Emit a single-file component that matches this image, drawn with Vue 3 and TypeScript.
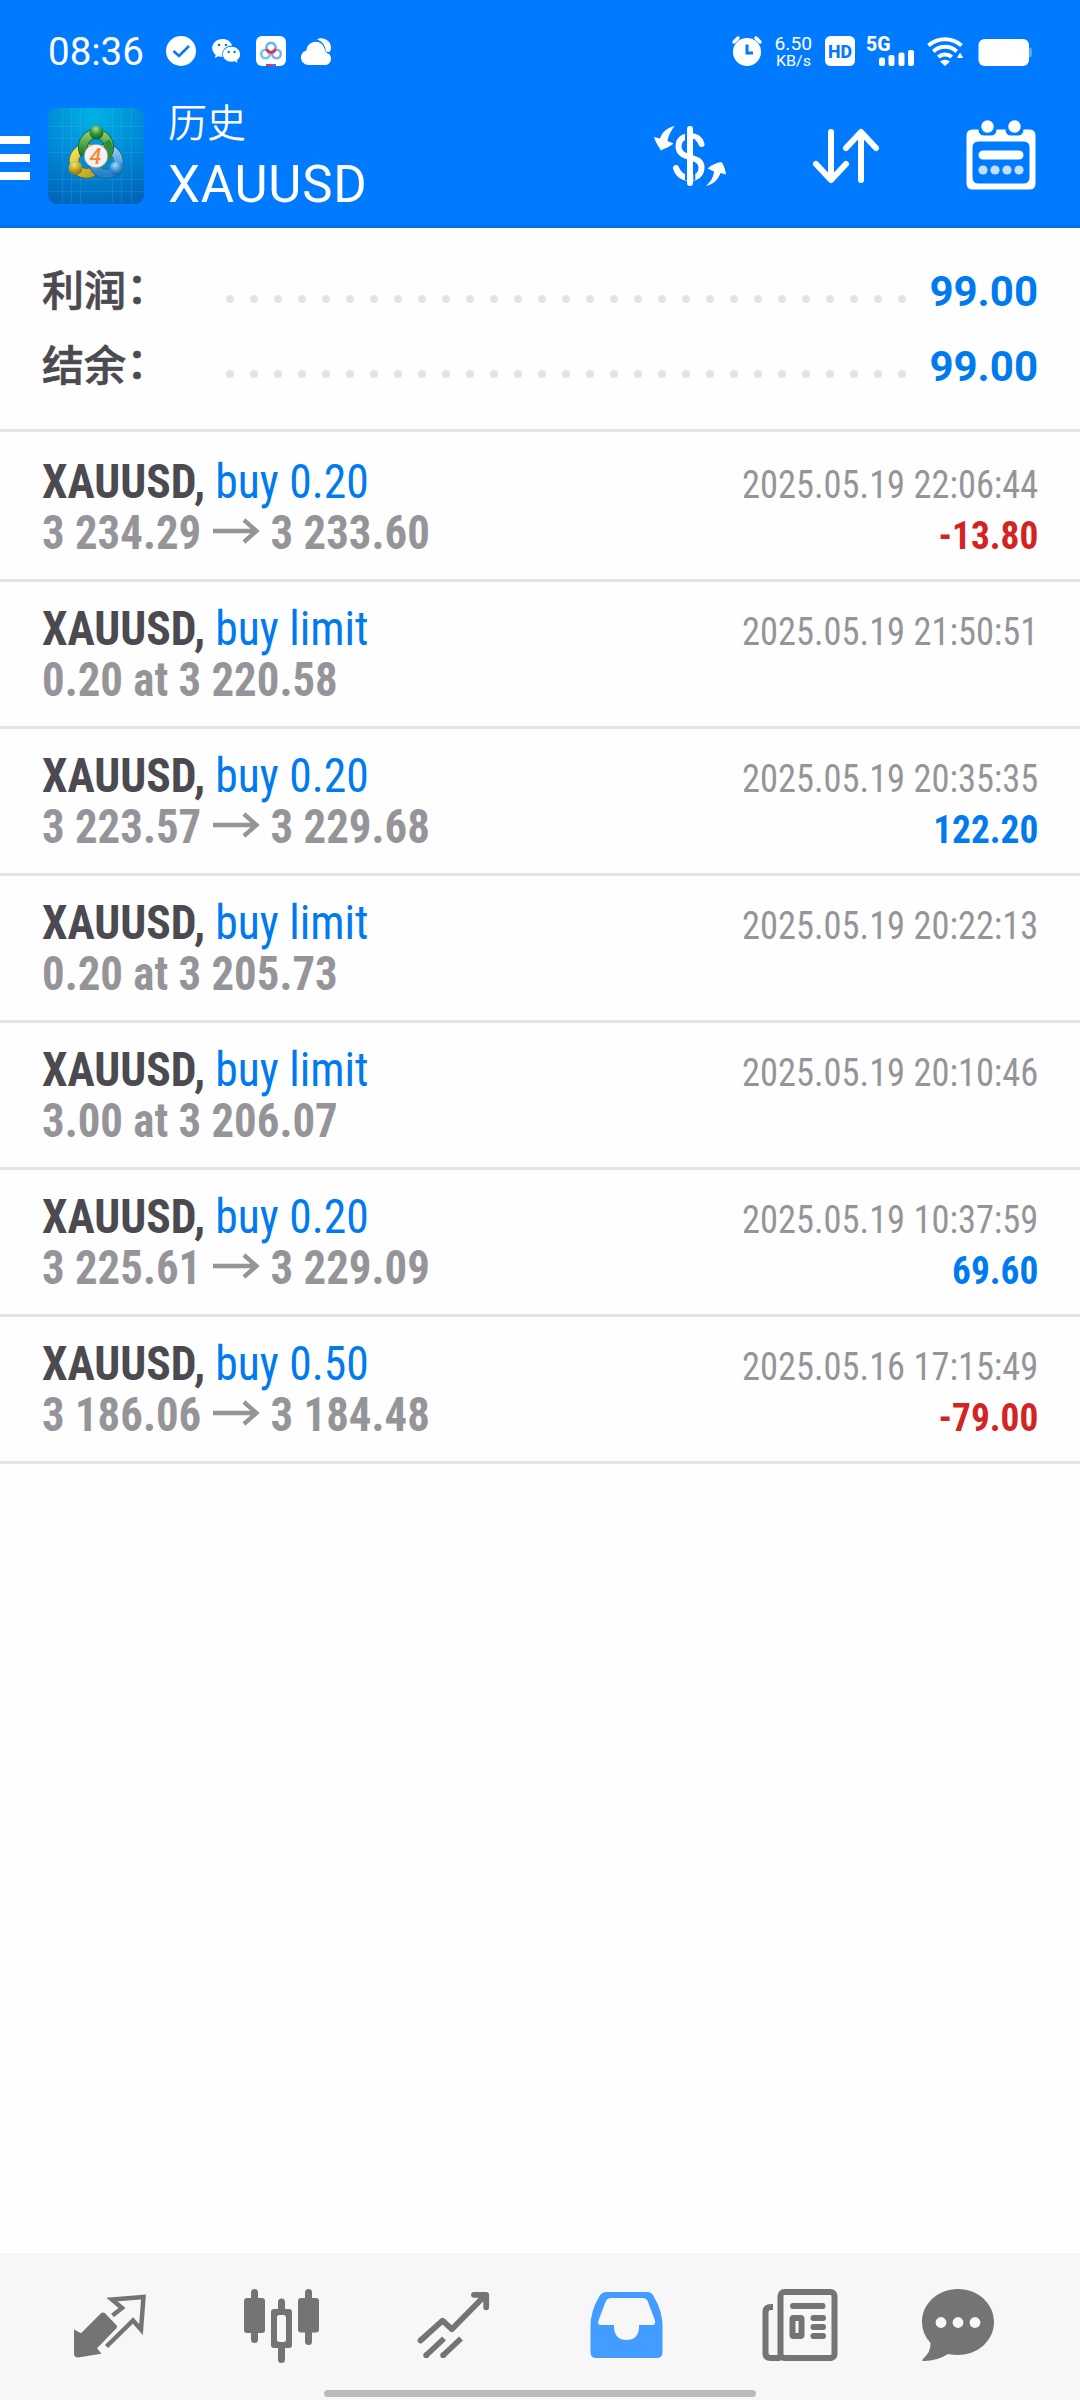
<script setup lang="ts">
interface Deal {
  action: string
  open: string
  close?: string
  time: string
  profit?: string
}

const summary = [
  { label: '利润', value: '99.00' },
  { label: '结余', value: '99.00' },
]

const deals: Deal[] = [
  { action: 'buy 0.20', open: '3 234.29', close: '3 233.60', time: '2025.05.19 22:06:44', profit: '-13.80' },
  { action: 'buy limit', open: '0.20 at 3 220.58', time: '2025.05.19 21:50:51' },
  { action: 'buy 0.20', open: '3 223.57', close: '3 229.68', time: '2025.05.19 20:35:35', profit: '122.20' },
  { action: 'buy limit', open: '0.20 at 3 205.73', time: '2025.05.19 20:22:13' },
  { action: 'buy limit', open: '3.00 at 3 206.07', time: '2025.05.19 20:10:46' },
  { action: 'buy 0.20', open: '3 225.61', close: '3 229.09', time: '2025.05.19 10:37:59', profit: '69.60' },
  { action: 'buy 0.50', open: '3 186.06', close: '3 184.48', time: '2025.05.16 17:15:49', profit: '-79.00' },
]
</script>

<template>
  <div class="screen">
    <header class="top">
      <div class="status">
        <span class="clock">08:36</span>
        <svg class="status-left" width="180" height="40" viewBox="160 30 180 40">
          <circle cx="181" cy="51" r="15" fill="#fff" />
          <path d="M173.500 51l5.500 5 10-10" fill="none" stroke="#007aff" stroke-width="2.600" />
          <path fill="#fff" d="M222.500 39c-5.800 0-10.300 4-10.300 9 0 2.800 1.400 5.200 3.600 6.900l-1 3 3.500-1.700c1.300.4 2.700.6 4.200.6-1.600-6.300 3.300-11 9.700-11.200-1.200-4-5.200-6.600-9.700-6.600z" />
          <path fill="#fff" d="M231.600 46.800c-5 0-8.700 3.400-8.700 7.500s3.700 7.500 8.700 7.500c1.100 0 2.200-.2 3.200-.5l2.900 1.600-.8-2.600c2-1.400 3.200-3.500 3.200-6 0-4.100-3.800-7.500-8.500-7.500z" />
          <g fill="#007aff"><circle cx="219" cy="45" r="1.300" /><circle cx="226" cy="45" r="1.300" /><circle cx="228.700" cy="52" r="1.200" /><circle cx="234.600" cy="52" r="1.200" /></g>
          <rect x="256" y="36" width="30" height="30" rx="6" fill="#fff" />
          <g fill="none" stroke-width="2.600">
            <circle cx="265.500" cy="54" r="4.300" stroke="#6fc8e8" />
            <circle cx="276.500" cy="54" r="4.300" stroke="#86aee8" />
            <circle cx="271" cy="47.500" r="4.600" stroke="#67b5e8" />
            <path d="M266.500 49a4.700 4.700 0 0 0 9 0" stroke="#e0305f" />
          </g>
          <rect x="266" y="64" width="5" height="2" fill="#e0305f" /><rect x="271" y="64" width="5" height="2" fill="#8a5bd0" />
          <path fill="#fff" d="M317 39.500c5-3.200 14 .5 14 8 0 2-.7 3.500-1.700 4.700l-3.500-.7c-.2-6-3.800-10.500-8.800-12z" />
          <path fill="#fff" d="M309 65c-4.600 0-8-3.300-8-7.500 0-3.700 2.400-6.300 5.400-7.100.5-5 4.300-8.700 9.300-8.700 4.800 0 8.200 3.200 9.200 8.200.4 1.800 1.800 2.800 3.100 3.500 1.900.8 3 2.600 3 5 0 4-2.600 6.600-6.500 6.600z" />
        </svg>
        <svg class="status-right" width="320" height="40" viewBox="725 30 320 40">
          <circle cx="747" cy="52" r="14" fill="#fff" />
          <path d="M734 42l4-4M760 42l-4-4" stroke="#fff" stroke-width="3.500" stroke-linecap="round" />
          <path d="M747 44.500v8.500h6" fill="none" stroke="#007aff" stroke-width="3" />
          <g class="st-text" fill="#fff">
            <text x="774.500" y="50" font-size="19" textLength="37.500" lengthAdjust="spacingAndGlyphs">6.50</text>
            <text x="776" y="65.500" font-size="15.500" textLength="35" lengthAdjust="spacingAndGlyphs">KB/s</text>
          </g>
          <rect x="825" y="36" width="30" height="30" rx="5.500" fill="#fff" />
          <text class="st-bold" x="828" y="58" font-size="19" fill="#007aff" textLength="24" lengthAdjust="spacingAndGlyphs">HD</text>
          <text class="st-bold" x="866" y="50.500" font-size="20" fill="#fff" textLength="24.500" lengthAdjust="spacingAndGlyphs">5G</text>
          <g fill="#fff">
            <rect x="879" y="57.500" width="6" height="8.500" rx="2" /><rect x="888.500" y="55" width="6" height="11" rx="2" />
            <rect x="898.500" y="52.500" width="6" height="13.500" rx="2" /><rect x="908" y="50" width="6" height="16" rx="2" />
          </g>
          <g fill="none" stroke="#fff" stroke-width="4">
            <path d="M928.500 45.500a25 25 0 0 1 33 0" /><path d="M933.300 51.500a17 17 0 0 1 23.400 0" /><path d="M938.300 57a10 10 0 0 1 13.400 0" />
          </g>
          <path fill="#fff" d="M940 61.500q5-3.500 10 0l-5 4.500zM957 58l3-5.500 3.200 5.500z" />
          <rect x="978.500" y="39" width="50.500" height="27" rx="6" fill="#fff" />
          <path d="M1029 47.500q3 0 3 3v4q0 3-3 3z" fill="#fff" opacity=".35" />
        </svg>
      </div>

      <div class="bar">
        <div class="menu"><i></i><i></i><i></i></div>
        <svg class="logo" width="96" height="96" viewBox="48 108 96 96">
          <defs>
            <radialGradient id="bg" cx=".48" cy=".05" r="1.050"><stop offset="0" stop-color="#00b2e6" /><stop offset=".5" stop-color="#008ad6" /><stop offset="1" stop-color="#0062b6" /></radialGradient>
            <linearGradient id="gr" x2="0" y2="1"><stop offset="0" stop-color="#86c96e" /><stop offset="1" stop-color="#1f7a2c" /></linearGradient>
            <linearGradient id="ye" x2="1" y2="1"><stop offset="0" stop-color="#f0e35a" /><stop offset="1" stop-color="#b49b16" /></linearGradient>
            <linearGradient id="bl" x2="0" y2="1"><stop offset="0" stop-color="#8ccbf2" /><stop offset="1" stop-color="#2681c8" /></linearGradient>
            <radialGradient id="gb" cx=".45" cy=".25" r=".8"><stop offset="0" stop-color="#a5e08c" /><stop offset=".5" stop-color="#2f9438" /><stop offset="1" stop-color="#0c5a1c" /></radialGradient>
            <radialGradient id="yb" cx=".4" cy=".25" r=".8"><stop offset="0" stop-color="#f3e27c" /><stop offset=".6" stop-color="#b79a1c" /><stop offset="1" stop-color="#7c6a10" /></radialGradient>
            <radialGradient id="bb" cx=".4" cy=".25" r=".8"><stop offset="0" stop-color="#a4d8f8" /><stop offset=".6" stop-color="#2f86cc" /><stop offset="1" stop-color="#125a9c" /></radialGradient>
          </defs>
          <rect x="48" y="108" width="96" height="96" rx="9" fill="url(#bg)" />
          <path d="M62.500 108v96M71.500 108v96M80.500 108v96M112.500 108v96M121.500 108v96M131.500 108v96M48 126.500h96M48 138.500h96M48 152.500h96M48 179.500h96M48 191.500h96" stroke="#7fdcff" stroke-opacity=".13" fill="none" />
          <g fill="none">
            <circle cx="86.500" cy="161" r="12.500" stroke="#776c12" stroke-width="10" /><circle cx="86.500" cy="161" r="12.500" stroke="url(#ye)" stroke-width="8.500" />
            <circle cx="106" cy="161.500" r="12.500" stroke="#155b94" stroke-width="10" /><circle cx="106" cy="161.500" r="12.500" stroke="url(#bl)" stroke-width="8.500" />
            <path d="M85 154a13 13 0 1 1 22 0" stroke="#145a24" stroke-width="10" /><path d="M85 154a13 13 0 1 1 22 0" stroke="url(#gr)" stroke-width="8.500" />
            <path d="M107 141q5 9 0 19" stroke="#2f8d38" stroke-width="6" />
          </g>
          <circle cx="96.500" cy="132.500" r="7" fill="url(#gb)" />
          <circle cx="75.500" cy="168" r="7" fill="url(#yb)" />
          <circle cx="116.500" cy="168.500" r="7" fill="url(#bb)" />
          <circle cx="96" cy="156" r="11.800" fill="#f1f1f4" stroke="#8a9688" stroke-width=".8" />
          <text class="four" x="95.500" y="163.500" font-size="21.500" text-anchor="middle" fill="#f08a35">4</text>
        </svg>
        <div class="title">
          <div class="title-small">历史</div>
          <div class="title-main">XAUUSD</div>
        </div>
        <svg class="ic-dollar" width="76" height="66" viewBox="652 122 76 66">
          <g fill="none" stroke="#fff" stroke-width="6" stroke-linecap="round">
            <path d="M690 129v54" />
            <path d="M701.500 144c-1.500-5-5.500-8-11.500-8-7 0-11.500 4-11.500 10.500 0 14 23 7.500 23 21 0 6.500-4.500 10.500-11.500 10.500-7.500 0-12-4-14-10" />
          </g>
          <path d="M686 131v15M686 163v17M694.300 139v14M694.300 167v13" stroke="#007aff" stroke-width="2" />
          <path fill="#fff" d="M674.500 126c-7 1.500-12.500 6-14.500 12.500l-6-1.500c1.500 5 4.500 10 7 13.500 4.500-2.500 8.500-3.500 12.500-7l-6-2.500c1-6 3.500-10.500 7-15z" />
          <path fill="#fff" d="M706 186c5-4.500 7.500-9 8-14.500l-6.500-3c4-3.500 9-6 14-6.500 2.500 3.500 4 8 4.500 12.500l-5.500-1.500c-2 6.500-7.500 11.500-14.500 13z" />
        </svg>
        <svg class="ic-sort" width="70" height="60" viewBox="811 126 70 60">
          <path d="M831 132v47M816 164l15 16 15-16M861 180v-47M846 148l15-16 15 16" fill="none" stroke="#fff" stroke-width="6" stroke-linecap="round" stroke-linejoin="round" />
        </svg>
        <svg class="ic-cal" width="70" height="70" viewBox="965.500 119.500 70 70">
          <path fill-rule="evenodd" fill="#fff" d="M972 129h6q0 6 6 6h6q6 0 6-6h9q0 6 6 6h6q6 0 6-6h6q6 0 6 6v48q0 6-6 6h-57q-6 0-6-6v-48q0-6 6-6zM978 141q-6 0-6 6v30q0 6 6 6h45q6 0 6-6v-30q0-6-6-6z" />
          <circle cx="987" cy="126" r="6.200" fill="#fff" /><circle cx="1014" cy="126" r="6.200" fill="#fff" />
          <rect x="978" y="150" width="45" height="9" rx="4.500" fill="#fff" />
          <g fill="#c4e0ff"><circle cx="982.500" cy="169.500" r="4.600" /><circle cx="994.500" cy="169.500" r="4.600" /><circle cx="1006.500" cy="169.500" r="4.600" /><circle cx="1018.500" cy="169.500" r="4.600" /></g>
        </svg>
      </div>
    </header>

    <section class="summary">
      <div v-for="s in summary" :key="s.label" class="sum-row">
        <span class="sum-label">{{ s.label }}<span class="colon">：</span></span>
        <span class="dots"><i v-for="n in 29" :key="n"></i></span>
        <span class="sum-value">{{ s.value }}</span>
      </div>
    </section>

    <main class="deals">
      <article v-for="d in deals" :key="d.time" class="deal">
        <div class="left">
          <div class="line order"><span class="sym">XAUUSD,</span><span class="act">{{ d.action }}</span></div>
          <div class="line price">
            <span>{{ d.open }}</span>
            <template v-if="d.close">
              <svg class="arrow" width="51" height="26" viewBox="0 0 51 26"><path d="M0 13h48M33.500 2l13.500 11-13.500 11" fill="none" stroke="#959599" stroke-width="4.600" /></svg>
              <span>{{ d.close }}</span>
            </template>
          </div>
        </div>
        <div class="right">
          <div class="line time">{{ d.time }}</div>
          <div v-if="d.profit" class="line profit" :class="{ loss: d.profit.startsWith('-') }">{{ d.profit }}</div>
        </div>
      </article>
    </main>

    <footer class="tabs">
      <div class="tab-icons">
        <svg width="84" height="84" viewBox="68 2282 84 84">
          <path d="M74 2329.500v24q0 4 4 4l23.500-3.700-4.500-5.500 19-19.500q2-2 0-4l-10.500-11q-2.500-2.500-5 0l-19.500 19.500z" fill="#747474" />
          <path d="M112.500 2315.500l9.500-7.500-10-8.500 31.500-2.500-2.500 32.500-8-9-26.500 26" fill="none" stroke="#747474" stroke-width="4.500" />
        </svg>
        <svg width="84" height="84" viewBox="240 2282 84 84">
          <g fill="#747474">
            <rect x="244" y="2298" width="21" height="35" rx="3" /><rect x="251" y="2289" width="7" height="54" rx="3.500" />
            <rect x="298" y="2298" width="21" height="34.500" rx="3" /><rect x="305" y="2289" width="7" height="56" rx="3.500" />
            <rect x="271" y="2309" width="21" height="39" rx="3" /><rect x="278" y="2298.500" width="7" height="64.500" rx="3.500" />
          </g>
          <rect x="277" y="2315" width="9" height="27" rx="2.500" fill="#f7f7f7" />
        </svg>
        <svg width="84" height="84" viewBox="412 2282 84 84">
          <path d="M420.500 2340.500l22-19.800 9.300 8.500 33-33.500M474 2294.800h12.200v12.500" fill="none" stroke="#747474" stroke-width="5.800" stroke-linecap="round" stroke-linejoin="round" />
          <path d="M426 2355.500l18-17M443 2355.500l18-17" stroke="#747474" stroke-width="5.600" /><circle cx="426.200" cy="2355.200" r="2.900" fill="#747474" /><circle cx="443.200" cy="2355.200" r="2.900" fill="#747474" />
        </svg>
        <svg width="84" height="84" viewBox="584 2282 84 84">
          <path fill-rule="evenodd" fill="#439cff" d="M606.500 2292h41q4 0 6 4 9 15 9 30v26q0 6-6 6h-60q-6 0-6-6v-26q0-15 9-30 2.500-4 7-4zM611 2298q-4 0-5.500 4l-7 18.500q-1.500 4.500 2.500 4.500h13v3q1 12 12.500 12t12.500-12v-3h13q4 0 3-4.500l-7-18.500q-1.500-4-5.500-4z" />
        </svg>
        <svg width="84" height="84" viewBox="756 2282 84 84">
          <g fill="none" stroke="#747474" stroke-width="6">
            <rect x="780.500" y="2292" width="54" height="66" rx="4" />
            <path d="M773 2307h-2q-5.500 0-5.500 5v41q0 5 5 5h10" />
          </g>
          <g fill="#747474"><rect x="790" y="2303" width="35.500" height="6" rx="3" /><rect x="810.500" y="2315" width="15.500" height="6" rx="3" /><rect x="810.500" y="2324" width="15.500" height="6" rx="3" /><rect x="810.500" y="2333" width="15.500" height="6" rx="3" /></g>
          <rect x="792.500" y="2318" width="9" height="18" rx="1" fill="none" stroke="#747474" stroke-width="6" />
        </svg>
        <svg class="chat" width="84" height="84" viewBox="916 2282 84 84">
          <path fill="#747474" d="M958 2289c20 0 36 14.500 36 33s-16 33-36 33q-5 0-10-1-11 7-24 7-3 0-1-2 8-7 7.500-16-8.500-9-8.500-21c0-18.500 16-33 36-33z" />
          <g fill="#f7f7f7"><circle cx="941" cy="2322.500" r="5.400" /><circle cx="958" cy="2322.500" r="5.400" /><circle cx="975" cy="2322.500" r="5.400" /></g>
        </svg>
      </div>
      <div class="home"></div>
    </footer>
  </div>
</template>

<style>
body { background: #fefefe; }
</style>

<style scoped>
.screen { width: 1080px; height: 2400px; display: flex; flex-direction: column; background: #fefefe; font-family: Roboto, "Noto Sans CJK SC", sans-serif; overflow: hidden; }
svg { display: block; flex: none; }
.top { height: 228px; box-sizing: border-box; background: #007aff; border-bottom: 3px solid #0070e4; color: #fff; flex: none; }
.status { height: 100px; display: flex; align-items: flex-start; }
.clock { width: 112px; padding-left: 48px; margin-top: 32px; line-height: 40px; font-size: 38.500px; }
.status-left, .status-right { margin-top: 30px; }
.status-right { margin-left: 385px; }
.st-text { font-family: Roboto, sans-serif; font-weight: 450; }
.st-bold { font-family: Roboto, sans-serif; font-weight: 800; }
.four { font-family: Roboto, sans-serif; font-weight: 500; font-style: italic; }
.bar { height: 125px; display: flex; align-items: flex-start; }
.menu { width: 30px; margin-top: 36px; display: flex; flex-direction: column; gap: 10px; }
.menu i { height: 8px; background: #fff; }
.logo { margin: 8px 0 0 18px; }
.title { width: 484px; margin-left: 24px; }
.title-small { font-family: "Noto Sans CJK SC", sans-serif; font-weight: 350; font-size: 39px; line-height: 40px; }
.title-main { font-size: 51px; line-height: 60px; margin-top: 15px; letter-spacing: 0.8px; }
.ic-dollar { margin-top: 22px; }
.ic-sort { margin: 26px 0 0 83px; }
.ic-cal { margin: 19.500px 0 0 84.500px; }
.summary { height: 179px; border-bottom: 3px solid #e4e4e4; padding: 22px 42px 0; flex: none; }
.sum-row { height: 75px; display: flex; align-items: center; }
.sum-label { width: 184px; font-family: "Noto Sans CJK SC", sans-serif; font-weight: 500; font-size: 42px; line-height: 75px; color: #4b4a50; -webkit-text-stroke: 0.7px #4b4a50; }
.colon { font-family: "Noto Sans CJK TC", sans-serif; margin-left: -10px; }
.dots { width: 680px; display: flex; gap: 16px; padding-top: 23px; }
.dots i { width: 8px; height: 8px; border-radius: 50%; background: #e4e4e4; flex: none; }
.sum-value { margin-left: auto; padding-top: 8px; font-size: 42px; font-weight: 700; color: #007aef; line-height: 75px; }
.deals { padding-top: 3px; flex: 1; }
.deal { height: 123px; border-bottom: 3px solid #e4e4e4; padding: 21px 42px 0; display: flex; justify-content: space-between; font-stretch: 75%; }
.line { height: 51px; line-height: 51px; font-size: 48.500px; white-space: nowrap; display: flex; transform-origin: left center; }
.order { transform: scaleX(0.939); }
.sym { font-weight: 700; color: #4b4a50; }
.act { color: #007aef; margin-left: 11px; }
.price { font-weight: 700; color: #959599; transform: scaleX(0.924); }
.arrow { margin: 11px 11px 0 13px; }
.right { padding-top: 3px; }
.right .line { font-size: 39.500px; justify-content: flex-end; transform-origin: right center; }
.time { color: #959599; transform: scaleX(0.922); }
.profit { font-weight: 700; color: #007aef; transform: scaleX(0.945); }
.profit.loss { color: #d32424; }
.tabs { height: 147px; background: #f7f7f7; flex: none; display: flex; flex-direction: column; align-items: center; }
.tab-icons { height: 137px; width: 1080px; box-sizing: border-box; padding-left: 68px; display: flex; gap: 88px; }
.tab-icons svg { margin-top: 29px; }
.tab-icons .chat { margin-left: -12px; }
.home { width: 432px; height: 7px; border-radius: 4px; background: #bbb; flex: none; }
</style>
